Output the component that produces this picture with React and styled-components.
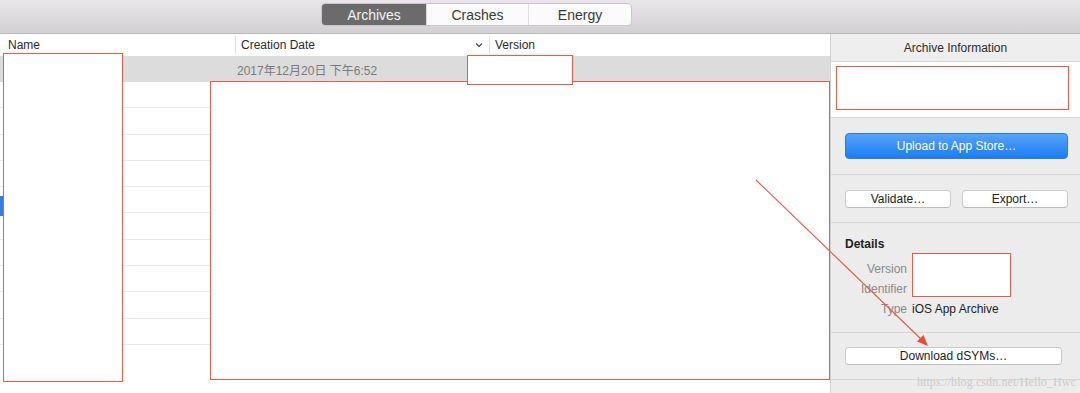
import React from "react";
import styled, { createGlobalStyle } from "styled-components";

const Global = createGlobalStyle`
  html, body { margin: 0; padding: 0; background: #ffffff; }
  body {
    font-family: "Liberation Sans", "Noto Sans CJK SC", Arial, sans-serif;
    -webkit-font-smoothing: antialiased;
  }
  #root { width: 1080px; height: 393px; overflow: hidden; }
`;

const Page = styled.div`
  position: relative;
  width: 1080px;
  height: 393px;
  display: flex;
  flex-direction: column;
  overflow: hidden;
`;

const Toolbar = styled.div`
  height: 34px;
  flex: 0 0 auto;
  border-bottom: 1px solid #b9b8b9;
  background: linear-gradient(#e8e6e8, #d2d0d2);
  display: flex;
  align-items: flex-start;
  padding-top: 3px;
  padding-left: 321px;
  box-sizing: border-box;
`;

const Segmented = styled.div`
  display: flex;
  height: 23px;
  border: 1px solid #c9c7c9;
  border-radius: 4px;
  background: #fbfbfb;
  overflow: hidden;
  box-sizing: border-box;
`;

const Segment = styled.div`
  width: ${(p) => p.$w}px;
  display: flex;
  align-items: center;
  justify-content: center;
  font-size: 14px;
  color: ${(p) => (p.$active ? "#f2f2f2" : "#3a3a3a")};
  background: ${(p) => (p.$active ? "#6b6b6b" : "transparent")};
  border-left: ${(p) => (p.$first ? "none" : "1px solid #dcdcdc")};
  box-sizing: border-box;
`;

const Main = styled.div`
  flex: 1;
  display: flex;
  min-height: 0;
`;

const TablePane = styled.div`
  position: relative;
  width: 830px;
  flex: 0 0 830px;
  background: #fff;
  display: flex;
  flex-direction: column;
`;

const HeaderRow = styled.div`
  height: 23px;
  display: flex;
  align-items: center;
  border-bottom: 1px solid #dcdcdc;
  box-sizing: border-box;
  font-size: 12px;
  color: #2a2a2a;
`;

const HeaderCell = styled.div`
  width: ${(p) => (p.$w ? `${p.$w}px` : "auto")};
  flex: ${(p) => (p.$w ? "0 0 auto" : "1")};
  height: 18px;
  display: flex;
  align-items: center;
  justify-content: space-between;
  padding-left: ${(p) => p.$pl || 5}px;
  padding-right: 6px;
  box-sizing: border-box;
  border-left: ${(p) => (p.$first ? "none" : "1px solid #e2e2e2")};
`;

const Chevron = styled.svg`
  width: 8px;
  height: 6px;
`;

const Row = styled.div`
  height: ${(p) => p.$h}px;
  display: flex;
  align-items: center;
  box-sizing: border-box;
  background: ${(p) => (p.$selected ? "#dcdcdc" : "#fff")};
  border-bottom: ${(p) => (p.$selected ? "none" : "1px solid #e9e9e9")};
  font-size: 12px;
  color: #7a7a7a;
`;

const DateCell = styled.div`
  padding-left: 237px;
`;

const SelectionMarker = styled.div`
  position: absolute;
  left: 0;
  top: 162px;
  width: 3px;
  height: 20px;
  background: #3b7ddc;
`;

const Sidebar = styled.div`
  flex: 1;
  border-left: 1px solid #d3d3d3;
  background: #ececec;
  display: flex;
  flex-direction: column;
  font-size: 12px;
  color: #222;
`;

const SideHeader = styled.div`
  height: 28px;
  display: flex;
  align-items: center;
  justify-content: center;
  border-bottom: 1px solid #d6d6d6;
  box-sizing: border-box;
  color: #2a2a2a;
  background: #eeeeee;
`;

const InfoBox = styled.div`
  height: 56px;
  background: #fff;
  border-bottom: 1px solid #d6d6d6;
  box-sizing: border-box;
`;

const Section = styled.div`
  padding: ${(p) => p.$pad};
  border-bottom: 1px solid #d6d6d6;
  display: flex;
  flex-direction: ${(p) => p.$dir || "row"};
  gap: ${(p) => p.$gap || 0}px;
`;

const PrimaryButton = styled.div`
  width: 223px;
  height: 26px;
  border-radius: 4px;
  background: linear-gradient(#56a3fb, #1c7cf0);
  border: 1px solid #2a7be0;
  box-sizing: border-box;
  color: #fff;
  display: flex;
  align-items: center;
  justify-content: center;
  font-size: 12px;
`;

const Button = styled.div`
  width: ${(p) => p.$w}px;
  height: 18px;
  border-radius: 4px;
  background: #fff;
  border: 1px solid #cbcbcb;
  border-bottom-color: #bdbdbd;
  box-sizing: border-box;
  color: #222;
  display: flex;
  align-items: center;
  justify-content: center;
  font-size: 12px;
`;

const DetailsTitle = styled.div`
  font-weight: bold;
  font-size: 12px;
  color: #222;
  margin-bottom: 11px;
`;

const DetailsGrid = styled.div`
  display: grid;
  grid-template-columns: 62px auto;
  column-gap: 5px;
  row-gap: 6px;
`;

const Label = styled.div`
  text-align: right;
  color: #8a8a8a;
  line-height: 14px;
`;

const Value = styled.div`
  color: #1e1e1e;
  line-height: 14px;
`;

const Watermark = styled.div`
  position: absolute;
  right: 4px;
  bottom: 3px;
  font-family: "Liberation Serif", serif;
  font-size: 12px;
  color: #cbcbcb;
  letter-spacing: 0.1px;
`;

const Annotation = styled.div`
  position: absolute;
  left: ${(p) => p.$x}px;
  top: ${(p) => p.$y}px;
  width: ${(p) => p.$w}px;
  height: ${(p) => p.$h}px;
  border: 1px solid #ea5c49;
  background: #fff;
  box-sizing: border-box;
`;

const ArrowLayer = styled.svg`
  position: absolute;
  left: 0;
  top: 0;
  width: 1080px;
  height: 393px;
  pointer-events: none;
`;

const rows = Array.from({ length: 10 });

export default function App() {
  return (
    <>
      <Global />
      <Page>
        <Toolbar>
          <Segmented>
            <Segment $w={104} $active $first>Archives</Segment>
            <Segment $w={102}>Crashes</Segment>
            <Segment $w={103}>Energy</Segment>
          </Segmented>
        </Toolbar>
        <Main>
          <TablePane>
            <HeaderRow>
              <HeaderCell $w={235} $first $pl={8}>Name</HeaderCell>
              <HeaderCell $w={254}>
                Creation Date
                <Chevron viewBox="0 0 8 6">
                  <path d="M1 1.5 L4 4.5 L7 1.5" fill="none" stroke="#444" strokeWidth="1.2" />
                </Chevron>
              </HeaderCell>
              <HeaderCell>Version</HeaderCell>
            </HeaderRow>
            <Row $selected $h={25}>
              <DateCell>2017年12月20日 下午6:52</DateCell>
            </Row>
            {rows.map((_, i) => (
              <Row key={i} $h={26.3} />
            ))}
            <SelectionMarker />
          </TablePane>
          <Sidebar>
            <SideHeader>Archive Information</SideHeader>
            <InfoBox />
            <Section $pad="15px 0 15px 14px">
              <PrimaryButton>Upload to App Store…</PrimaryButton>
            </Section>
            <Section $pad="15px 0 14px 14px" $gap={11}>
              <Button $w={106}>Validate…</Button>
              <Button $w={106}>Export…</Button>
            </Section>
            <Section $pad="14px 0 16px 14px" $dir="column">
              <DetailsTitle>Details</DetailsTitle>
              <DetailsGrid>
                <Label>Version</Label>
                <Value>&nbsp;</Value>
                <Label>Identifier</Label>
                <Value>&nbsp;</Value>
                <Label>Type</Label>
                <Value>iOS App Archive</Value>
              </DetailsGrid>
            </Section>
            <Section $pad="14px 0 14px 14px">
              <Button $w={217}>Download dSYMs…</Button>
            </Section>
          </Sidebar>
        </Main>

        <Annotation $x={3} $y={53} $w={120} $h={329} />
        <Annotation $x={210} $y={81} $w={620} $h={299} />
        <Annotation $x={467} $y={55} $w={106} $h={30} />
        <Annotation $x={836} $y={66} $w={233} $h={44} />
        <Annotation $x={912} $y={253} $w={99} $h={44} />
        <ArrowLayer viewBox="0 0 1080 393">
          <line x1="756" y1="180" x2="922" y2="340" stroke="#ea5c49" strokeWidth="1.2" />
          <polygon points="928,346 917,341.5 923.5,335" fill="#ea4a37" />
        </ArrowLayer>
        <Watermark>https://blog.csdn.net/Hello_Hwc</Watermark>
      </Page>
    </>
  );
}
